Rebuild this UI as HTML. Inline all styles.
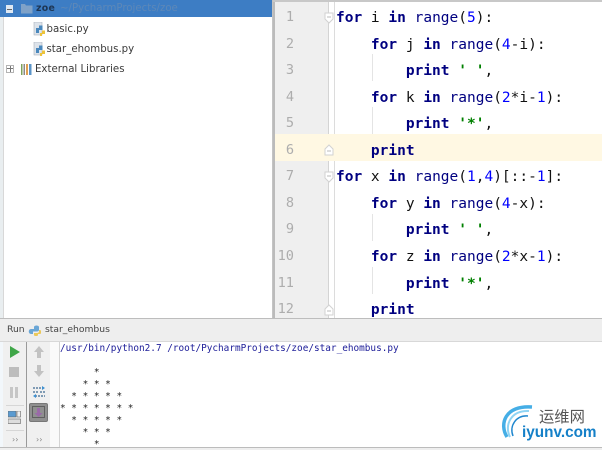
<!DOCTYPE html>
<html><head><meta charset="utf-8">
<style>
html,body{margin:0;padding:0;background:#fff}
#p{position:relative;width:602px;height:450px;overflow:hidden;background:#fff;font-family:"DejaVu Sans",sans-serif;filter:blur(.35px)}
.a{position:absolute}
.t{position:absolute;white-space:pre;font-size:10.2px;line-height:14px;color:#3a3a3a}
.ln{position:absolute;left:258px;width:36px;text-align:right;font:13.6px/16px "DejaVu Sans Mono",monospace;color:#adadad}
.c{position:absolute;left:336px;white-space:pre;font:14.5px/20px "DejaVu Sans Mono",monospace;color:#111}
.c b{color:#000080;font-weight:bold}
.c s{text-decoration:none;color:#000080}
.c i{font-style:normal;color:#0000ff}
.c u{text-decoration:none;color:#008000;font-weight:bold}
.o{position:absolute;left:60px;white-space:pre;font:9.4px/12px "DejaVu Sans Mono",monospace;color:#222}
</style></head><body><div id="p">

<!-- left tree -->
<div class="a" style="left:0;top:0;width:272px;height:318px;background:#fff"></div>
<div class="a" style="left:0;top:0;width:3px;height:318px;background:#e9eef0"></div>
<div class="a" style="left:3px;top:0;width:1px;height:318px;background:#d8d8d8"></div>
<div class="a" style="left:0;top:0;width:273px;height:17px;background:#3d7dc4"></div>
<div class="a" style="left:6px;top:5px;width:7px;height:8px;background:#dfe8f2"></div>
<div class="a" style="left:7px;top:9px;width:5px;height:1px;background:#666"></div>
<svg class="a" style="left:20px;top:3px" width="14" height="11"><path d="M1 1h4l1 1.5h6.500v8H1z" fill="#7fa2c8"/></svg>
<div class="t" style="left:36px;top:2px;font-weight:bold;font-size:9.4px;letter-spacing:.3px;color:#1d3553">zoe</div>
<div class="t" style="left:60px;top:2px;color:#5d88b8">~/PycharmProjects/zoe</div>

<svg class="a" style="left:33px;top:22px" width="13" height="14"><rect x="1" y="0" width="8" height="13" fill="#dde3ea" stroke="#aab2bc" stroke-width=".6"/><path d="M3 6h3V3.500h3.500V8H6v3H3z" fill="#4a88bd"/><path d="M7 11h2V8.500h3V12H9v2H7z" fill="#ecc33a"/></svg>
<div class="t" style="left:46.500px;top:23px">basic.py</div>
<svg class="a" style="left:33px;top:42px" width="13" height="14"><rect x="1" y="0" width="8" height="13" fill="#dde3ea" stroke="#aab2bc" stroke-width=".6"/><path d="M3 6h3V3.500h3.500V8H6v3H3z" fill="#4a88bd"/><path d="M7 11h2V8.500h3V12H9v2H7z" fill="#ecc33a"/></svg>
<div class="t" style="left:46.500px;top:43px">star_ehombus.py</div>

<div class="a" style="left:6px;top:65px;width:6px;height:6px;border:1px solid #b4b4b4;background:#fff"></div>
<div class="a" style="left:7px;top:68px;width:6px;height:1px;background:#777"></div>
<div class="a" style="left:9.5px;top:66px;width:1px;height:6px;background:#777"></div>
<svg class="a" style="left:20px;top:63px" width="13" height="13"><rect x="1" y="1" width="1.5" height="11" fill="#7ea35b"/><rect x="3.5" y="1" width="1.5" height="11" fill="#8a8a8a"/><rect x="6" y="1" width="2" height="11" fill="#e0a050"/><rect x="9" y="1" width="2.500" height="11" fill="#5b94c8"/></svg>
<div class="t" style="left:35px;top:63px">External Libraries</div>

<!-- divider -->
<div class="a" style="left:272px;top:0;width:1px;height:318px;background:#c4c4c4"></div>

<!-- editor -->
<div class="a" style="left:273px;top:1px;width:329px;height:317px;background:#fff"></div>
<div class="a" style="left:273px;top:0;width:329px;height:2px;background:#c8c8c8"></div>
<div class="a" style="left:273px;top:2px;width:2px;height:316px;background:#bbb"></div>
<div class="a" style="left:275px;top:2px;width:53px;height:316px;background:#efefef"></div>
<div class="a" style="left:328px;top:2px;width:1px;height:316px;background:#d4d4d4"></div>
<div class="a" style="left:334px;top:2px;width:1px;height:316px;background:#dcdcdc"></div>
<div class="a" style="left:275px;top:134px;width:327px;height:27px;background:#fff8e3"></div>
<div class="a" style="left:372px;top:54px;width:1px;height:27px;background:#e4e4e4"></div>
<div class="a" style="left:372px;top:107px;width:1px;height:27px;background:#e4e4e4"></div>
<div class="a" style="left:372px;top:214px;width:1px;height:27px;background:#e4e4e4"></div>
<div class="a" style="left:372px;top:267px;width:1px;height:27px;background:#e4e4e4"></div>

<svg class="a" style="left:324px;top:12px" width="10" height="12"><path d="M1 1h8v6l-4 4-4-4z" fill="#fff" stroke="#d2d2d2"/><path d="M3 5h4" stroke="#bbb"/></svg>
<svg class="a" style="left:324px;top:144px" width="10" height="12"><path d="M1 11h8V5L5 1 1 5z" fill="#fff" stroke="#d2d2d2"/><path d="M3 7h4" stroke="#bbb"/></svg>
<svg class="a" style="left:324px;top:171px" width="10" height="12"><path d="M1 1h8v6l-4 4-4-4z" fill="#fff" stroke="#d2d2d2"/><path d="M3 5h4" stroke="#bbb"/></svg>
<svg class="a" style="left:324px;top:304px" width="10" height="12"><path d="M1 11h8V5L5 1 1 5z" fill="#fff" stroke="#d2d2d2"/><path d="M3 7h4" stroke="#bbb"/></svg>

<div class="ln" style="top:9px">1</div>
<div class="ln" style="top:36px">2</div>
<div class="ln" style="top:62px">3</div>
<div class="ln" style="top:89px">4</div>
<div class="ln" style="top:115px">5</div>
<div class="ln" style="top:142px">6</div>
<div class="ln" style="top:168px">7</div>
<div class="ln" style="top:195px">8</div>
<div class="ln" style="top:221px">9</div>
<div class="ln" style="top:248px">10</div>
<div class="ln" style="top:275px">11</div>
<div class="ln" style="top:301px">12</div>

<div class="c" style="top:8px"><b>for</b> i <b>in</b> <s>range</s>(<i>5</i>):</div>
<div class="c" style="top:35px">    <b>for</b> j <b>in</b> <s>range</s>(<i>4</i>-i):</div>
<div class="c" style="top:61px">        <b>print</b> <u>' '</u>,</div>
<div class="c" style="top:88px">    <b>for</b> k <b>in</b> <s>range</s>(<i>2</i>*i-<i>1</i>):</div>
<div class="c" style="top:114px">        <b>print</b> <u>'*'</u>,</div>
<div class="c" style="top:141px">    <b>print</b></div>
<div class="c" style="top:167px"><b>for</b> x <b>in</b> <s>range</s>(<i>1</i>,<i>4</i>)[::-<i>1</i>]:</div>
<div class="c" style="top:194px">    <b>for</b> y <b>in</b> <s>range</s>(<i>4</i>-x):</div>
<div class="c" style="top:220px">        <b>print</b> <u>' '</u>,</div>
<div class="c" style="top:247px">    <b>for</b> z <b>in</b> <s>range</s>(<i>2</i>*x-<i>1</i>):</div>
<div class="c" style="top:274px">        <b>print</b> <u>'*'</u>,</div>
<div class="c" style="top:300px">    <b>print</b></div>

<!-- run header -->
<div class="a" style="left:0;top:318px;width:602px;height:23px;background:#eeeeee;border-top:1px solid #bdbdbd;box-sizing:border-box"></div>
<div class="a" style="left:0;top:341px;width:602px;height:1px;background:#d8d8d8"></div>
<div class="t" style="left:7px;top:323px;font-size:9.2px;color:#444">Run</div>
<svg class="a" style="left:28px;top:324px" width="13" height="12"><path d="M3 5h3V3c0-2 5-2 5 0v3c0 1-1 1.500-2 1.500H5V10H3C0 10 0 5 3 5z" fill="#6aa6d6"/><path d="M6 9h3c1 0 2-.5 2-1.500V6h1c1.500 0 1.500 4 0 4h-2v1c0 1.500-4 1.500-4 0z" fill="#ecc95a"/></svg>
<div class="t" style="left:45px;top:323px;font-size:9.2px;color:#444">star_ehombus</div>

<!-- toolbars -->
<div class="a" style="left:0;top:342px;width:3px;height:105px;background:#f2f7fb"></div>
<div class="a" style="left:3px;top:342px;width:23px;height:105px;background:#f0f0f0"></div>
<div class="a" style="left:26px;top:342px;width:1px;height:105px;background:#9a9a9a"></div>
<div class="a" style="left:27px;top:342px;width:23px;height:105px;background:#f0f0f0"></div>
<div class="a" style="left:50px;top:342px;width:10px;height:105px;background:#fafafa"></div>
<div class="a" style="left:59px;top:342px;width:1px;height:105px;background:#d4d4d4"></div>
<svg class="a" style="left:10px;top:346px" width="10" height="12"><path d="M0 0l10 6L0 12z" fill="#3fa648"/></svg>
<div class="a" style="left:9px;top:367px;width:10px;height:10px;background:#bdbdbd"></div>
<div class="a" style="left:10px;top:387px;width:3px;height:11px;background:#c6c6c6"></div>
<div class="a" style="left:15px;top:387px;width:3px;height:11px;background:#c6c6c6"></div>
<div class="a" style="left:6px;top:405px;width:18px;height:1px;background:#d6d6d6"></div>
<svg class="a" style="left:8px;top:411px" width="13" height="13"><rect x="0" y="0" width="8" height="6" fill="#5b9bd1" stroke="#666" stroke-width=".6"/><rect x="9" y="0" width="3.500" height="6" fill="#eee" stroke="#666" stroke-width=".6"/><rect x="0" y="8" width="12.500" height="4.500" fill="#ddd" stroke="#666" stroke-width=".6"/></svg>
<div class="a" style="left:6px;top:430px;width:18px;height:1px;background:#d6d6d6"></div>
<div class="a" style="left:12px;top:435px;font:8px/10px 'DejaVu Sans',sans-serif;color:#888">››</div>
<div class="a" style="left:36px;top:435px;font:8px/10px 'DejaVu Sans',sans-serif;color:#888">››</div>
<svg class="a" style="left:33px;top:346px" width="12" height="12"><path d="M6 0l5 6H8v6H4V6H1z" fill="#c2c2c2"/></svg>
<svg class="a" style="left:33px;top:365px" width="12" height="12"><path d="M6 12l5-6H8V0H4v6H1z" fill="#c2c2c2"/></svg>
<svg class="a" style="left:32px;top:385px" width="14" height="14"><path d="M1 3h9M1 7h5M8 7h5M3 11h10" stroke="#5a7fa0" stroke-width="1.400" stroke-dasharray="2 1" fill="none"/><path d="M10 1l3 2-3 2zM4 9l-3 2 3 2z" fill="#3d8fd0"/></svg>
<div class="a" style="left:29px;top:403px;width:19px;height:19px;box-sizing:border-box;background:#8f8f8f;border:1px solid #777;border-radius:2px"></div>
<svg class="a" style="left:32px;top:406px" width="13" height="13"><rect x=".5" y=".5" width="12" height="11" fill="none" stroke="#5f5f5f"/><path d="M5 2h3v5h2.500l-4 4-4-4H5z" fill="#9a6aa8"/></svg>

<!-- console -->
<div class="o" style="top:343px;color:#20209a">/usr/bin/python2.7 /root/PycharmProjects/zoe/star_ehombus.py</div>
<div class="o" style="top:367px">      *</div>
<div class="o" style="top:379px">    * * *</div>
<div class="o" style="top:391px">  * * * * *</div>
<div class="o" style="top:403px">* * * * * * *</div>
<div class="o" style="top:415px">  * * * * *</div>
<div class="o" style="top:427px">    * * *</div>
<div class="o" style="top:439px">      *</div>
<div class="a" style="left:0;top:447px;width:602px;height:1px;background:#bcbcbc"></div>
<div class="a" style="left:0;top:448px;width:602px;height:2px;background:#eee"></div>

<!-- watermark -->
<svg class="a" style="left:498px;top:400px" width="40" height="42"><path d="M9 37C1 24 7 5 34 7" fill="none" stroke="#45aee6" stroke-width="3.500"/><path d="M12 37C6 25 13 10 31 11" fill="none" stroke="#8fd4f4" stroke-width="2"/><path d="M15 36C11 26 18 15 30 16" fill="none" stroke="#1f87cf" stroke-width="1.500"/></svg>
<div class="a" style="left:539px;top:406px;white-space:pre;font:15.3px/20px 'Noto Sans CJK SC',sans-serif;color:#555">运维网</div>
<div class="a" style="left:522px;top:424px;white-space:pre;font:bold 15.3px/18px 'Liberation Sans',sans-serif;color:#1580c8">iyunv.com</div>

</div></body></html>
